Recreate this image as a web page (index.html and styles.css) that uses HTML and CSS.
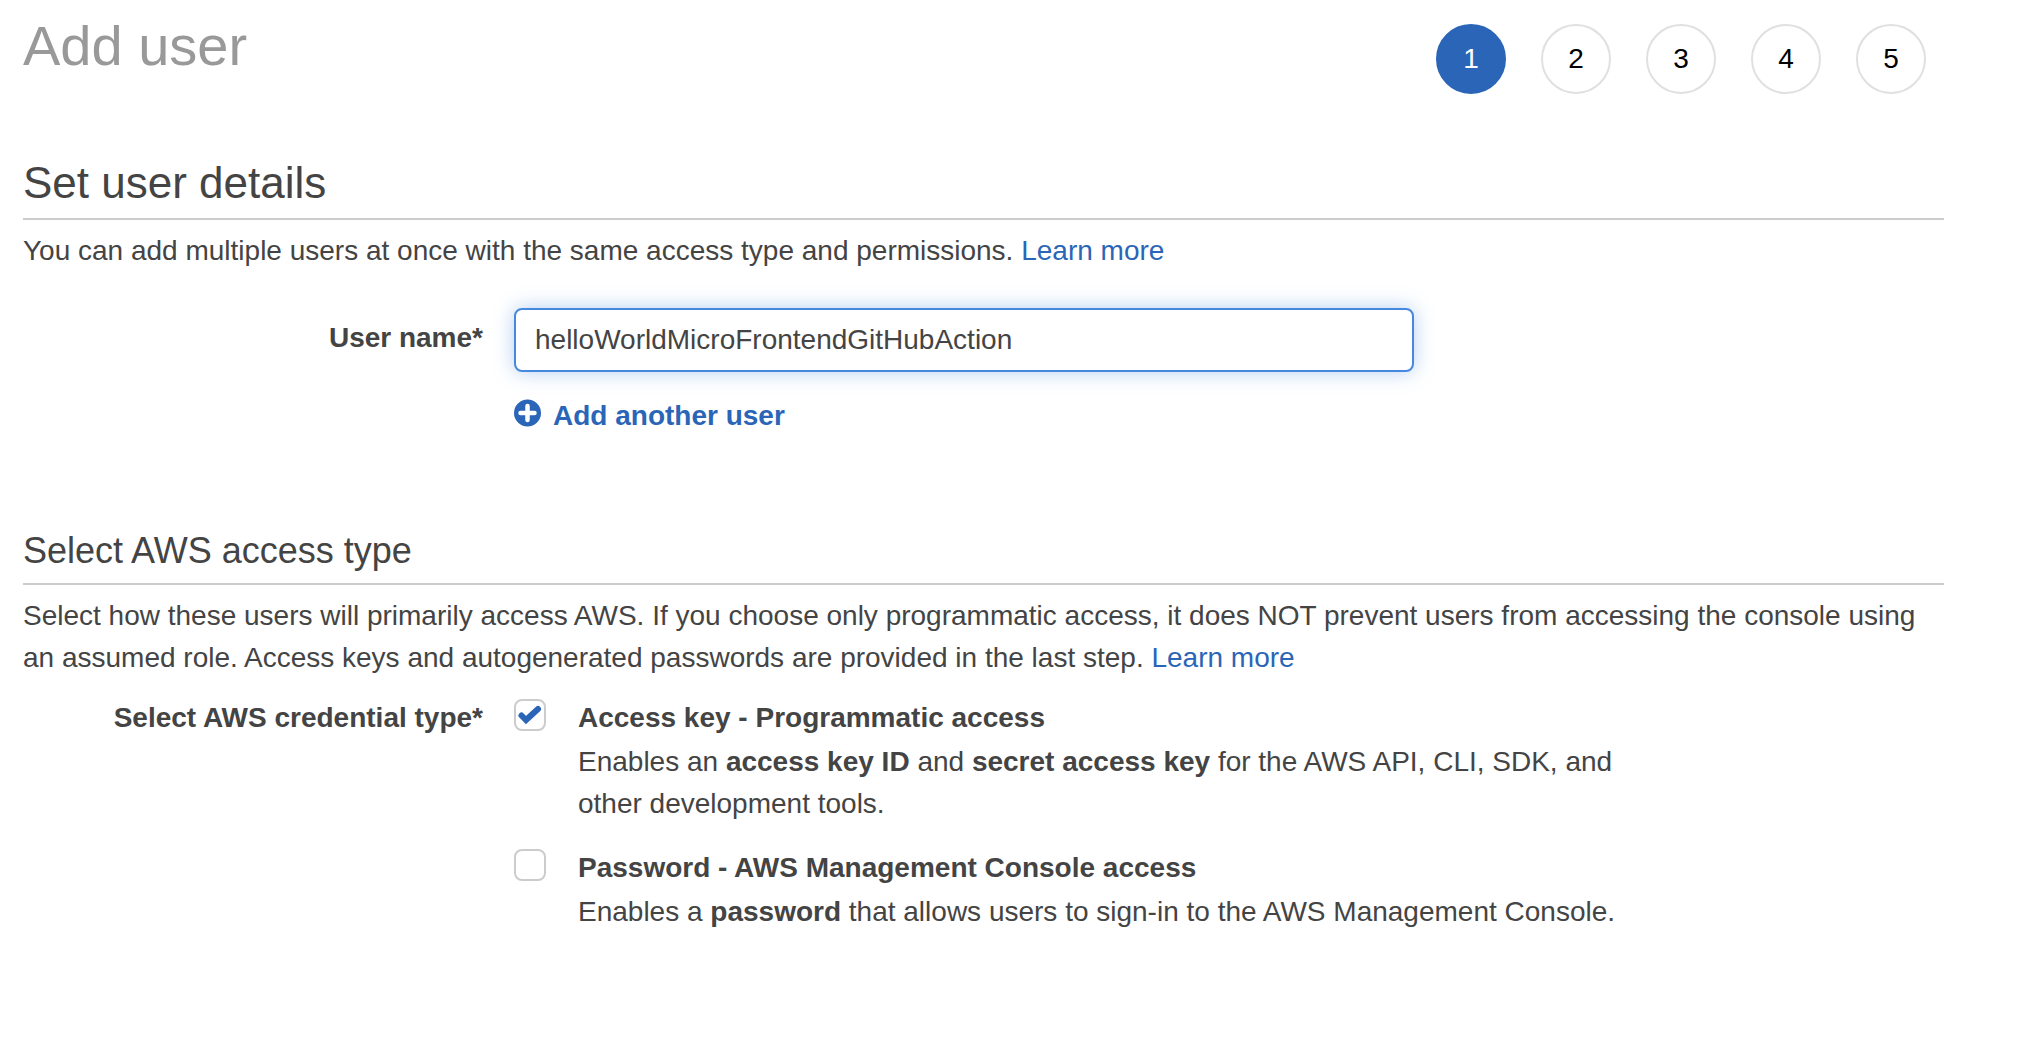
FILE: index.html
```html
<!DOCTYPE html>
<html lang="en">
<head>
<meta charset="utf-8">
<meta name="viewport" content="width=device-width, initial-scale=1">
<title>Add user</title>
<link rel="stylesheet" href="styles.css">
</head>
<body>
<main class="page">
  <header class="page-header">
    <h1 class="page-title">Add user</h1>
    <ol class="steps">
      <li class="step step-active" aria-current="step">1</li>
      <li class="step">2</li>
      <li class="step">3</li>
      <li class="step">4</li>
      <li class="step">5</li>
    </ol>
  </header>

  <section class="details">
    <h2 class="section-title">Set user details</h2>
    <p class="intro">You can add multiple users at once with the same access type and permissions. <a class="link" href="#">Learn more</a></p>
    <div class="field-row user-row">
      <label class="field-label user-label" for="user-name">User name*</label>
      <div class="user-field">
        <input class="text-input" id="user-name" type="text" value="helloWorldMicroFrontendGitHubAction" spellcheck="false">
        <button class="add-button" type="button">
          <svg class="add-icon" viewBox="0 0 28 28" aria-hidden="true">
            <circle cx="13.500" cy="14" r="13.500" fill="#2b65b7"/>
            <path d="M13.500 7v14M6.500 14h14" stroke="#fff" stroke-width="4.500" stroke-linecap="round"/>
          </svg>
          Add another user
        </button>
      </div>
    </div>
  </section>

  <section class="access">
    <h3 class="section-subtitle">Select AWS access type</h3>
    <p class="intro">Select how these users will primarily access AWS. If you choose only programmatic access, it does NOT prevent users from accessing the console using an assumed role. Access keys and autogenerated passwords are provided in the last step. <a class="link" href="#">Learn more</a></p>
    <div class="field-row credential-row" role="group" aria-labelledby="credential-label">
      <span class="field-label" id="credential-label">Select AWS credential type*</span>
      <div class="options">
        <div class="option">
          <input class="checkbox" id="access-key" type="checkbox" checked>
          <div class="option-text">
            <label class="option-title" for="access-key">Access key - Programmatic access</label>
            <p class="option-description">Enables an <strong>access key ID</strong> and <strong>secret access key</strong> for the AWS API, CLI, SDK, and other development tools.</p>
          </div>
          <svg class="checkmark" viewBox="0 0 32 32" aria-hidden="true">
            <path d="M7.500 16.500l4.500 4.500L24 10" fill="none" stroke="#2b65b7" stroke-width="6" stroke-linecap="round"/>
          </svg>
        </div>
        <div class="option">
          <input class="checkbox" id="password" type="checkbox">
          <div class="option-text">
            <label class="option-title" for="password">Password - AWS Management Console access</label>
            <p class="option-description">Enables a <strong>password</strong> that allows users to sign-in to the AWS Management Console.</p>
          </div>
          <svg class="checkmark" viewBox="0 0 32 32" aria-hidden="true">
            <path d="M7.500 16.500l4.500 4.500L24 10" fill="none" stroke="#2b65b7" stroke-width="6" stroke-linecap="round"/>
          </svg>
        </div>
      </div>
    </div>
  </section>
</main>
</body>
</html>
```
FILE: styles.css
```css
* {
  box-sizing: border-box;
}

body {
  margin: 0;
  background: #fff;
  color: #444;
  font-family: "Liberation Sans", Arial, sans-serif;
  font-size: 28px;
  line-height: 42px;
}

h1, h2, h3, p, ol {
  margin: 0;
  padding: 0;
  font-weight: 400;
}

.page {
  padding: 14px 84px 40px 23px;
}

.page-header {
  display: flex;
  justify-content: space-between;
  align-items: flex-start;
}

.page-title {
  color: #999;
  font-size: 56px;
  line-height: 64px;
}

.steps {
  display: flex;
  gap: 35px;
  padding: 10px 18px 0 0;
  list-style: none;
}

.step {
  display: flex;
  align-items: center;
  justify-content: center;
  width: 70px;
  height: 70px;
  border: 2px solid #e0e0e0;
  border-radius: 50%;
  color: #000;
}

.step-active {
  border-color: #2b65b7;
  background: #2b65b7;
  color: #fff;
}

.details {
  margin-top: 63px;
}

.section-title {
  padding-bottom: 9px;
  border-bottom: 2px solid #ccc;
  font-size: 44px;
  line-height: 52px;
}

.section-subtitle {
  padding-bottom: 11px;
  border-bottom: 2px solid #ccc;
  font-size: 36px;
  line-height: 42px;
}

.intro {
  margin-top: 10px;
}

.link {
  color: #2b65b7;
  text-decoration: none;
}

.field-row {
  display: grid;
  grid-template-columns: 460px minmax(0, 1fr);
  column-gap: 31px;
}

.user-row {
  margin-top: 36px;
}

.field-label {
  font-weight: 700;
  text-align: right;
}

.user-label {
  padding-top: 9px;
}

.user-field {
  max-width: 900px;
}

.text-input {
  display: block;
  width: 100%;
  height: 64px;
  padding: 0 19px;
  border: 2px solid #4688dd;
  border-radius: 8px;
  outline: none;
  background: #fff;
  box-shadow: 0 0 20px rgba(70, 136, 221, 0.4);
  color: #444;
  font: inherit;
}

.add-button {
  display: flex;
  align-items: center;
  gap: 11px;
  margin-top: 23px;
  padding: 0;
  border: 0;
  background: none;
  color: #2b65b7;
  font: inherit;
  font-weight: 700;
  cursor: pointer;
}

.add-icon {
  width: 28px;
  height: 28px;
  margin-bottom: 6px;
}

.access {
  margin-top: 93px;
}

.credential-row {
  margin-top: 18px;
}

.options {
  display: grid;
  row-gap: 22px;
}

.option {
  display: grid;
  grid-template-columns: 32px minmax(0, 1050px);
  column-gap: 32px;
}

.checkbox {
  grid-area: 1 / 1;
  width: 32px;
  height: 32px;
  margin: 2px 0 0;
  border: 2px solid #ccc;
  border-radius: 8px;
  background: #fff;
  appearance: none;
}

.checkmark {
  grid-area: 1 / 1;
  width: 32px;
  height: 32px;
  margin-top: 2px;
  visibility: hidden;
  pointer-events: none;
}

.checkbox:checked ~ .checkmark {
  visibility: visible;
}

.option-text {
  grid-area: 1 / 2;
}

.option-title {
  display: block;
  margin-bottom: 2px;
  font-weight: 700;
}
```
